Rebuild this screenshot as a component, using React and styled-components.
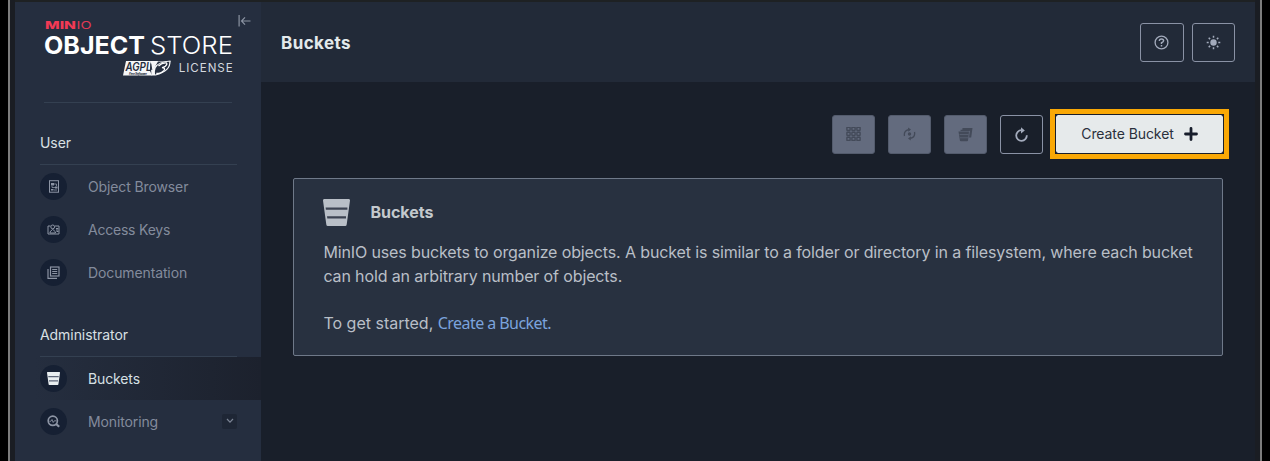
import React from "react";
import styled, { createGlobalStyle, css } from "styled-components";

const Global = createGlobalStyle`
  * { box-sizing: border-box; }
  body { margin: 0; background: #000; overflow: hidden; }
  button { font-family: inherit; padding: 0; margin: 0; }
  h1, h2, p { margin: 0; }
`;

const Frame = styled.div`
  height: 461px;
  width: 1254px;
  margin-left: 8px;
  display: flex;
  background: #1a1d23;
  border: solid #7d7d7d;
  border-width: 0 2px;
  padding: 0 5px;
  font-family: Inter, "Liberation Sans", sans-serif;
`;
const Window = styled.div`
  flex: 1;
  display: flex;
  min-width: 0;
  border-top: 2px solid #1e2123;
  background: #191f2a;
`;
const Sidebar = styled.aside`
  width: 246px;
  flex: none;
  background: #252e3f;
  display: flex;
  flex-direction: column;
`;
const Brand = styled.div`
  height: 100px;
  margin: 0 24px 0 29px;
  width: 208px;
  display: flex;
  align-items: flex-start;
`;
const LogoSvg = styled.svg`
  display: block;
  flex: none;
  margin-top: 16px;
`;
const Collapse = styled.svg`
  display: block;
  flex: none;
  margin: 12px 0 0 4px;
`;
const Rule = styled.div`
  height: 1px;
  background: #344051;
  margin: 0 ${(p) => p.$right || 24}px 0 ${(p) => p.$left || 25}px;
`;
const Group = styled.section`
  padding-top: ${(p) => p.$top}px;
`;
const GroupTitle = styled.div`
  height: 31px;
  padding-left: 25px;
  font-size: 14px;
  line-height: 20px;
  color: #d9e0e4;
  letter-spacing: -0.06px;
`;
const Item = styled.div`
  height: 43.3px;
  display: flex;
  align-items: center;
  padding: 0 24px 1px 25px;
  font-size: 14px;
  letter-spacing: ${(p) => p.$ls || -0.12}px;
  color: ${(p) => (p.$active ? "#d7e0e4" : "#838b9c")};
  ${(p) => p.$active && css`background: linear-gradient(90deg, #252e3f 8%, #1e2431 80%, #1c212d);`}
`;
const Bubble = styled.span`
  width: 27px;
  height: 27px;
  border-radius: 50%;
  background: #162033;
  margin-right: 21px;
  display: flex;
  align-items: center;
  justify-content: center;
  color: ${(p) => (p.$active ? "#e8eef0" : "#8d95a5")};
`;
const Chevron = styled.span`
  margin-left: auto;
  width: 15px;
  height: 15px;
  border-radius: 2px;
  background: #1e2635;
  display: flex;
  align-items: center;
  justify-content: center;
`;
const Main = styled.main`
  flex: 1;
  min-width: 0;
`;
const Header = styled.header`
  height: 80px;
  background: #222a38;
  display: flex;
  align-items: center;
  gap: 8px;
  padding: 0 20px;
`;
const PageTitle = styled.h1`
  font-size: 17px;
  line-height: 24px;
  font-weight: 700;
  letter-spacing: 0.4px;
  padding-top: 1px;
  color: #e3eaec;
  margin-right: auto;
`;
const IconButton = styled.button`
  width: 43px;
  height: 39px;
  border: 1px solid #8a92a5;
  border-radius: 3px;
  background: transparent;
  color: #a3abbc;
  display: flex;
  align-items: center;
  justify-content: center;
  ${(p) => p.$disabled && css`
    background: #636b7e;
    border-color: #535b6c;
    color: #434a59;
  `}
`;
const HeaderButton = styled(IconButton)`
  width: 43.500px;
`;
const Toolbar = styled.div`
  display: flex;
  justify-content: flex-end;
  align-items: center;
  gap: 13px;
  height: 50px;
  margin: 27px 26px 0 0;
`;
const Highlight = styled.div`
  border: 5px solid #f9a806;
  width: 179px;
  height: 50px;
  margin-left: -6px;
  background: #191e2a;
`;
const CreateButton = styled.button`
  width: 169px;
  height: 40px;
  display: flex;
  align-items: center;
  justify-content: center;
  gap: 10px;
  border: 1px solid #191e2a;
  border-radius: 3px;
  background: #e6eaeb;
  background-clip: padding-box;
  color: #2a303c;
  font-size: 14px;
  letter-spacing: -0.08px;
  padding-bottom: 1px;
`;
const Card = styled.section`
  margin: 18.500px 32px 0 32px;
  height: 178px;
  border: 1px solid #6f7989;
  border-radius: 2px;
  background: #283140;
  padding: 19px 0 0 29.400px;
  color: #b9bfc7;
  font-size: 16px;
  line-height: 23.7px;
  white-space: nowrap;
`;
const CardHead = styled.div`
  display: flex;
  align-items: center;
  height: 29px;
  gap: 20px;
  margin-bottom: 14.500px;
`;
const CardTitle = styled.h2`
  font-size: 16px;
  font-weight: 700;
  color: #c3c9cd;
  padding-top: 1px;
`;
const Line = styled.p`
  height: 23.7px;
  letter-spacing: ${(p) => p.$ls || 0}px;
`;
const Link = styled.a`
  font-family: "Noto Sans", sans-serif;
  color: #7ba3dd;
  letter-spacing: -0.560px;
`;

function Logo() {
  return (
    <LogoSvg width="190" height="62" viewBox="44 18 190 62">
      <g fontFamily="Inter, sans-serif">
        <text x="45" y="29" fontSize="10.5" fontWeight="800" fill="#f23a55" textLength="31" lengthAdjust="spacingAndGlyphs">MIN</text>
        <text x="76.500" y="29" fontSize="10.5" fontWeight="400" fill="#e03a55" textLength="15" lengthAdjust="spacingAndGlyphs">IO</text>
        <text x="44" y="54" fontSize="24.500" fontWeight="700" fill="#fff" textLength="101" lengthAdjust="spacingAndGlyphs">OBJECT</text>
        <text x="150" y="54" fontSize="24.500" fontWeight="300" fill="#fff" textLength="83" lengthAdjust="spacingAndGlyphs">STORE</text>
        <text x="178.700" y="71.800" fontSize="11.6" fill="#d4d8de" textLength="54" lengthAdjust="spacing">LICENSE</text>
        <path d="M126 61H171Q170 71 157 75.500H123Z" fill="#f5f6f8" />
        <text x="125.500" y="71" fontSize="11.5" fontWeight="600" fontStyle="italic" fill="#252e3f" textLength="26" lengthAdjust="spacingAndGlyphs">AGPL</text>
        <text x="129" y="74.500" fontSize="3.5" fontWeight="600" fontStyle="italic" fill="#252e3f" textLength="18">Free Software</text>
        <path d="M150 61L152.500 71L158 61.500H172V77H153L150 71z" fill="#252e3f" />
        <path d="M150.500 61H153L154 67.500Q159 61 170.500 60.500Q171.500 71.500 155.500 75.500H151.500z" fill="#f5f6f8" />
        <path d="M155 74.500Q154 66.500 160.500 63.500Q165 61.500 169.300 61.700Q169.500 71 155 74.500z" fill="#252e3f" />
        <path d="M158.500 66Q162 62.500 166.300 62.800Q167.800 64 165.300 66.300Q164 67.400 162 67.700Q165.800 68 164 70.300Q161.500 73.300 156.300 73.500" fill="none" stroke="#fff" strokeWidth="1.300" />
        <path d="M150.800 63.500L151.800 70" stroke="#252e3f" strokeWidth="1" />
      </g>
    </LogoSvg>
  );
}

const BrowserIcon = () => (
  <svg width="12" height="13" viewBox="0 0 12 13">
    <rect x="1.500" y=".7" width="9" height="11.500" fill="none" stroke="currentColor" />
    <path d="M3 3h3v2.500H3zM7 6.500h2.500v2H7zM3 9h2.500v1.500H3z" fill="currentColor" />
    <path d="M6 4h2.500v2M4 6v1.500h3M6 10h3" fill="none" stroke="currentColor" strokeWidth=".8" />
  </svg>
);
const KeysIcon = () => (
  <svg width="13" height="11" viewBox="0 0 13 11" fill="none" stroke="currentColor">
    <path d="M3.500 2H1v8h11V2H8" />
    <circle cx="5.700" cy="2.900" r="1.900" />
    <path d="M3 9V7.800l2.700-2.500L8.400 7.800V9zM9 4.500h2.300M9 6h2.300M9.500 7.500h2" />
  </svg>
);
const DocIcon = () => (
  <svg width="13" height="13" viewBox="0 0 13 13" fill="none" stroke="currentColor" strokeWidth="1.150">
    <rect x="3.500" y="1" width="8.500" height="9" />
    <path d="M1 3v9.300h9M5.200 3.500h5M5.200 5.500h5M5.200 7.500h5" />
  </svg>
);
const BucketIcon = ({ size = 13, bands = "#5c6678" }) => (
  <svg width={size} height={size} viewBox="0 0 27 27">
    <path d="M1 0h25q1 0 1 1.500l-3.300 24q-.2 1.500-1.500 1.500H4.800q-1.300 0-1.500-1.500L0 1.500Q0 0 1 0z" fill="currentColor" />
    <path d="M2.600 8.500h21.800v2.300H2.900zM4 17.300h19v2.200H4.300z" fill={bands} />
  </svg>
);
const MonitorIcon = () => (
  <svg width="13" height="13" viewBox="0 0 13 13" fill="none" stroke="currentColor">
    <circle cx="5.800" cy="5.800" r="4.600" strokeWidth="1.700" />
    <path d="M2.500 6.300h1.300L5 4.500l1.200 3L7.300 5.800h2" strokeWidth=".9" />
    <path d="M8.800 8.800l3.400 3" strokeWidth="2.200" />
  </svg>
);
const GridIcon = () => (
  <svg width="15" height="14" viewBox="0 0 15 14" fill="none" stroke="currentColor" strokeWidth="1.400">
    {[0, 5, 10].map((y) => [0, 5, 10].map((x) => (
      <rect key={x + "-" + y} x={x + 0.9} y={y + 0.3} width="3.200" height="3.200" rx=".4" />
    )))}
  </svg>
);
const SyncIcon = () => (
  <svg width="13" height="14" viewBox="0 0 13 14" fill="none" stroke="currentColor" strokeWidth="1.300">
    <circle cx="6.500" cy="7" r="1.700" fill="currentColor" stroke="none" />
    <path d="M1.500 9Q.5 4 5.500 2.600M11.500 5Q12.500 10 7.500 11.400" />
    <path d="M5 .4L8 2.500L5.300 4.800zM8 9.200L5 11.500L7.700 13.600z" fill="currentColor" stroke="none" />
  </svg>
);
const LifecycleIcon = () => (
  <svg width="15" height="15" viewBox="0 0 15 15">
    <path d="M4.500 1H14.500L13.200 10.500H11L12 3H4.300zM2.500 2.800H12L11.700 4H2.600z" fill="currentColor" />
    <path d="M.5 4.500H11L10 13.500Q9.900 14.300 9 14.300H3Q2 14.300 1.900 13.500z" fill="currentColor" />
    <path d="M1.500 7.500h9M2 10.800h8" stroke="#636b7e" strokeWidth=".6" />
  </svg>
);
const RefreshIcon = () => (
  <svg width="13" height="15" viewBox="0 0 13 15">
    <path d="M11.800 8.300A5.300 5.300 0 1 1 6.500 3.200H8" fill="none" stroke="currentColor" strokeWidth="1.800" />
    <path d="M6 .2L9.800 3.400L6 6.600z" fill="currentColor" />
  </svg>
);
const HelpIcon = () => (
  <svg width="15" height="15" viewBox="0 0 15 15" fill="none" stroke="currentColor">
    <circle cx="7.500" cy="7.500" r="6.400" strokeWidth="1.300" />
    <path d="M5.400 6Q5.300 4 7.500 4Q9.600 4 9.600 5.800Q9.500 7 7.500 7.700V9" strokeWidth="1.500" />
    <path d="M7.500 10v1.500" strokeWidth="1.500" />
  </svg>
);
const SunIcon = () => (
  <svg width="15" height="15" viewBox="0 0 15 15">
    <circle cx="7.500" cy="7.500" r="3.200" fill="currentColor" />
    <path d="M7.500 .7v2M7.500 12.300v2M.7 7.500h2M12.300 7.500h2M2.700 2.700l1.400 1.400M10.900 10.900l1.400 1.400M2.700 12.300l1.400-1.400M10.900 4.100l1.400-1.400" stroke="currentColor" strokeWidth="1.500" />
  </svg>
);

const NavItem = ({ icon, label, active, ls, children }) => (
  <Item $active={active} $ls={ls}>
    <Bubble $active={active}>{icon}</Bubble>
    {label}
    {children}
  </Item>
);

export default function App() {
  return (
    <>
      <Global />
      <Frame>
        <Window>
          <Sidebar>
            <Brand>
              <Logo />
              <Collapse width="13" height="14" viewBox="0 0 13 14" fill="none" stroke="#8b93a2" strokeWidth="1.200">
                <path d="M1.100 1v11.500M12.500 7H3.500M7 3.300L3.500 7L7 10.700" />
              </Collapse>
            </Brand>
            <Rule $left={29} $right={29} />
            <Group $top={30}>
              <GroupTitle>User</GroupTitle>
              <Rule />
              <NavItem icon={<BrowserIcon />} label="Object Browser" />
              <NavItem icon={<KeysIcon />} label="Access Keys" ls={-0.22} />
              <NavItem icon={<DocIcon />} label="Documentation" />
            </Group>
            <Group $top={30}>
              <GroupTitle>Administrator</GroupTitle>
              <Rule />
              <NavItem active icon={<BucketIcon />} label="Buckets" />
              <NavItem icon={<MonitorIcon />} label="Monitoring">
                <Chevron>
                  <svg width="8" height="6" viewBox="0 0 8 6" fill="none" stroke="#7b8494" strokeWidth="1.200"><path d="M1 1l3 3.200L7 1" /></svg>
                </Chevron>
              </NavItem>
            </Group>
          </Sidebar>
          <Main>
            <Header>
              <PageTitle>Buckets</PageTitle>
              <HeaderButton><HelpIcon /></HeaderButton>
              <HeaderButton><SunIcon /></HeaderButton>
            </Header>
            <Toolbar>
              <IconButton $disabled><GridIcon /></IconButton>
              <IconButton $disabled><SyncIcon /></IconButton>
              <IconButton $disabled><LifecycleIcon /></IconButton>
              <IconButton><RefreshIcon /></IconButton>
              <Highlight>
                <CreateButton>
                  Create Bucket
                  <svg width="14" height="14" viewBox="0 0 14 14" stroke="#171d2b" strokeWidth="2.800" strokeLinecap="round"><path d="M7 1.500v11M1.500 7h11" /></svg>
                </CreateButton>
              </Highlight>
            </Toolbar>
            <Card>
              <CardHead>
                <BucketIcon size={27} bands="#3c4352" />
                <CardTitle>Buckets</CardTitle>
              </CardHead>
              <Line $ls={-0.127}>MinIO uses buckets to organize objects. A bucket is similar to a folder or directory in a filesystem, where each bucket</Line>
              <Line $ls={-0.127}>can hold an arbitrary number of objects.</Line>
              <Line />
              <Line>To get started, <Link>Create a Bucket.</Link></Line>
            </Card>
          </Main>
        </Window>
      </Frame>
    </>
  );
}
